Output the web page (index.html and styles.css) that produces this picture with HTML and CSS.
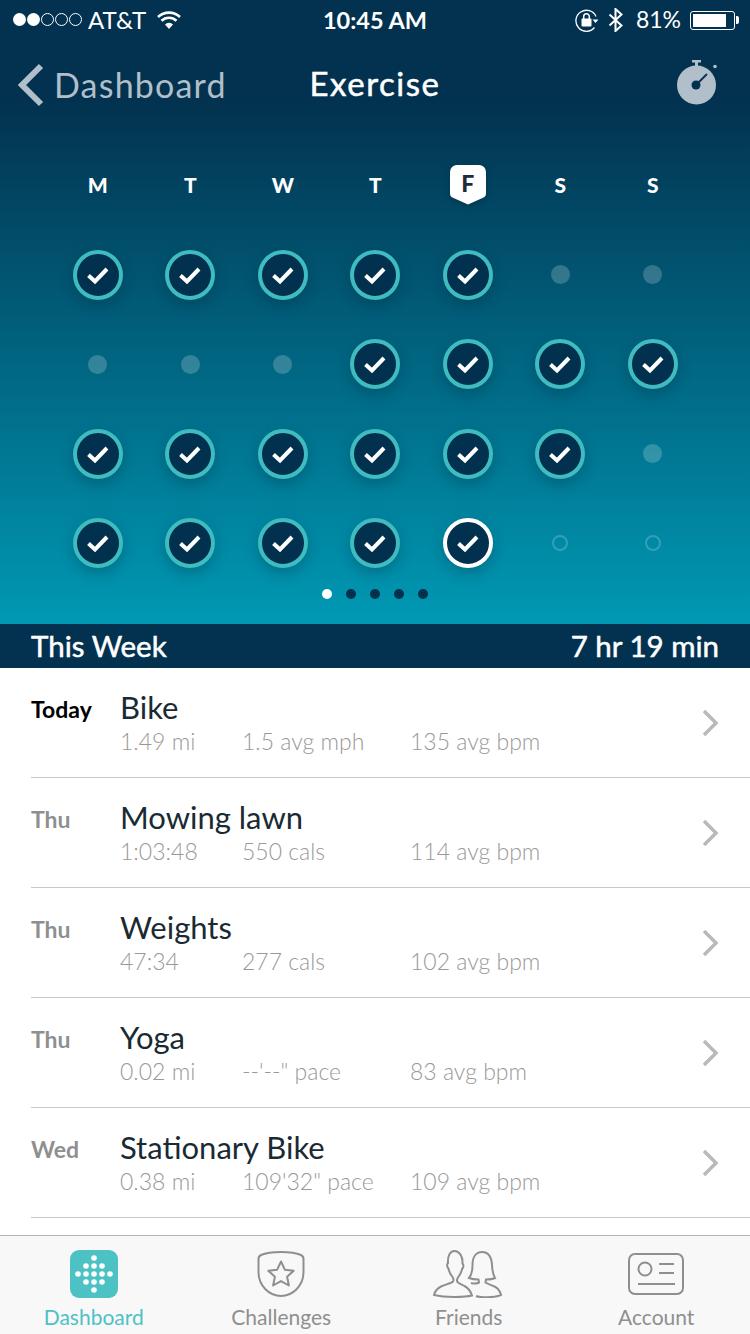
FILE: index.html
```html
<!DOCTYPE html>
<html lang="en">
<head>
	<meta charset="utf-8">
	<meta name="viewport" content="width=device-width, initial-scale=1.0" />
	<title>Exercise</title>
	<link rel="stylesheet" href="styles.css">
</head>
<body>
	<svg class="defs" width="0" height="0">
		<symbol id="check" viewBox="0 0 50 50"><path d="M15.500 25.500l6.500 6 12-12.500" fill="none" stroke="#fff" stroke-width="4"/></symbol>
		<symbol id="chev" viewBox="0 0 18 28"><path d="M2 2l12 12L2 26" fill="none" stroke="#b9b9b9" stroke-width="3.500"/></symbol>
	</svg>

	<div class="top">
		<div class="status">
			<div class="status-left">
				<span class="signal"><b></b><b></b><i></i><i></i><i></i></span>
				<span>AT&amp;T</span>
				<svg class="wifi" width="26" height="20" viewBox="0 0 26 20"><path d="M13 19l-4-4.500a5.500 5.500 0 0 1 8 0z" fill="#fff"/><path d="M5.500 10.800a10.800 10.800 0 0 1 15 0M2 7a16 16 0 0 1 22 0" fill="none" stroke="#fff" stroke-width="2.600"/></svg>
			</div>
			<div class="status-time">10:45 AM</div>
			<div class="status-right">
				<svg width="24" height="24" viewBox="0 0 24 24"><path d="M21 8.500A10.500 10.500 0 1 0 19.500 19.500" fill="none" stroke="#fff" stroke-width="1.300"/><path d="M17.500 11.500h6l-3 3.500z" fill="#fff"/><rect x="6.500" y="10.500" width="10" height="8" rx="1" fill="#fff"/><path d="M8.700 11V8.500a2.800 2.800 0 0 1 5.600 0V11" fill="none" stroke="#fff" stroke-width="1.500"/></svg>
				<svg class="bt" width="16" height="24" viewBox="0 0 16 24"><path d="M1.500 6.500l12 11-6 5.500V1l6 5.500-12 11" fill="none" stroke="#fff" stroke-width="2"/></svg>
				<span class="pct">81%</span>
				<span class="battery"><span class="battery-fill"></span></span><span class="battery-tip"></span>
			</div>
		</div>

		<div class="nav">
			<div class="nav-back">
				<svg width="28" height="44" viewBox="0 0 28 44"><path d="M25 3L6 22l19 19" fill="none" stroke="#b0bfc9" stroke-width="6"/></svg>
				<span>Dashboard</span>
			</div>
			<div class="nav-title">Exercise</div>
			<svg class="nav-timer" width="44" height="46" viewBox="0 0 44 46">
				<rect x="16" y="0" width="9" height="2.500" fill="#b0bfc9"/>
				<rect x="19" y="2" width="3" height="4" fill="#b0bfc9"/>
				<circle cx="20.500" cy="25" r="19.500" fill="#b0bfc9"/>
				<circle cx="39" cy="6.500" r="1.800" fill="#b0bfc9"/>
				<circle cx="20" cy="25" r="4.500" fill="#02324f"/>
				<path d="M20 25l11-11" stroke="#02324f" stroke-width="1.800"/>
			</svg>
		</div>

		<div class="cal">
			<div class="cal-day">M</div>
			<div class="cal-day">T</div>
			<div class="cal-day">W</div>
			<div class="cal-day">T</div>
			<div class="cal-day cal-today">
				<svg width="36" height="40" viewBox="0 0 36 40"><path d="M7 0h22a7 7 0 0 1 7 7v21c0 3-1 4-3.500 5L18 39.500 3.500 33C1 32 0 31 0 28V7a7 7 0 0 1 7-7z" fill="#fff"/></svg>
				<span>F</span>
			</div>
			<div class="cal-day">S</div>
			<div class="cal-day">S</div>

			<div class="cell"><span class="done"><svg><use href="#check"/></svg></span></div>
			<div class="cell"><span class="done"><svg><use href="#check"/></svg></span></div>
			<div class="cell"><span class="done"><svg><use href="#check"/></svg></span></div>
			<div class="cell"><span class="done"><svg><use href="#check"/></svg></span></div>
			<div class="cell"><span class="done"><svg><use href="#check"/></svg></span></div>
			<div class="cell"><span class="rest"></span></div>
			<div class="cell"><span class="rest"></span></div>

			<div class="cell"><span class="rest"></span></div>
			<div class="cell"><span class="rest"></span></div>
			<div class="cell"><span class="rest"></span></div>
			<div class="cell"><span class="done"><svg><use href="#check"/></svg></span></div>
			<div class="cell"><span class="done"><svg><use href="#check"/></svg></span></div>
			<div class="cell"><span class="done"><svg><use href="#check"/></svg></span></div>
			<div class="cell"><span class="done"><svg><use href="#check"/></svg></span></div>

			<div class="cell"><span class="done"><svg><use href="#check"/></svg></span></div>
			<div class="cell"><span class="done"><svg><use href="#check"/></svg></span></div>
			<div class="cell"><span class="done"><svg><use href="#check"/></svg></span></div>
			<div class="cell"><span class="done"><svg><use href="#check"/></svg></span></div>
			<div class="cell"><span class="done"><svg><use href="#check"/></svg></span></div>
			<div class="cell"><span class="done"><svg><use href="#check"/></svg></span></div>
			<div class="cell"><span class="rest"></span></div>

			<div class="cell"><span class="done"><svg><use href="#check"/></svg></span></div>
			<div class="cell"><span class="done"><svg><use href="#check"/></svg></span></div>
			<div class="cell"><span class="done"><svg><use href="#check"/></svg></span></div>
			<div class="cell"><span class="done"><svg><use href="#check"/></svg></span></div>
			<div class="cell"><span class="done now"><svg><use href="#check"/></svg></span></div>
			<div class="cell"><span class="todo"></span></div>
			<div class="cell"><span class="todo"></span></div>
		</div>

		<div class="pager"><b class="on"></b><b></b><b></b><b></b><b></b></div>
	</div>

	<div class="week">
		<span>This Week</span>
		<span>7 hr 19 min</span>
	</div>

	<ul class="list">
		<li class="row">
			<div class="row-day row-day-now">Today</div>
			<div class="row-main">
				<div class="row-name">Bike</div>
				<div class="row-stats"><span>1.49 mi</span><span>1.5 avg mph</span><span>135 avg bpm</span></div>
			</div>
			<svg class="chev"><use href="#chev"/></svg>
		</li>
		<li class="row">
			<div class="row-day">Thu</div>
			<div class="row-main">
				<div class="row-name">Mowing lawn</div>
				<div class="row-stats"><span>1:03:48</span><span>550 cals</span><span>114 avg bpm</span></div>
			</div>
			<svg class="chev"><use href="#chev"/></svg>
		</li>
		<li class="row">
			<div class="row-day">Thu</div>
			<div class="row-main">
				<div class="row-name">Weights</div>
				<div class="row-stats"><span>47:34</span><span>277 cals</span><span>102 avg bpm</span></div>
			</div>
			<svg class="chev"><use href="#chev"/></svg>
		</li>
		<li class="row">
			<div class="row-day">Thu</div>
			<div class="row-main">
				<div class="row-name">Yoga</div>
				<div class="row-stats"><span>0.02 mi</span><span>--'--" pace</span><span>83 avg bpm</span></div>
			</div>
			<svg class="chev"><use href="#chev"/></svg>
		</li>
		<li class="row">
			<div class="row-day">Wed</div>
			<div class="row-main">
				<div class="row-name">Stationary Bike</div>
				<div class="row-stats"><span>0.38 mi</span><span>109'32" pace</span><span>109 avg bpm</span></div>
			</div>
			<svg class="chev"><use href="#chev"/></svg>
		</li>
	</ul>

	<nav class="tabs">
		<div class="tab tab-on">
			<svg width="48" height="48" viewBox="0 0 48 48">
				<rect width="48" height="48" rx="9" fill="#4cc2c4"/>
				<g fill="#fff">
					<circle cx="24" cy="8" r="2.800"/>
					<circle cx="16" cy="16" r="2.800"/><circle cx="24" cy="16" r="2.800"/><circle cx="32" cy="16" r="2.800"/>
					<circle cx="8" cy="24" r="2.800"/><circle cx="16" cy="24" r="2.800"/><circle cx="24" cy="24" r="2.800"/><circle cx="32" cy="24" r="2.800"/><circle cx="40" cy="24" r="2.800"/>
					<circle cx="16" cy="32" r="2.800"/><circle cx="24" cy="32" r="2.800"/><circle cx="32" cy="32" r="2.800"/>
					<circle cx="24" cy="40" r="2.800"/>
				</g>
			</svg>
			<span>Dashboard</span>
		</div>
		<div class="tab">
			<svg width="48" height="48" viewBox="0 0 48 48" fill="none" stroke="#8f8f8f" stroke-width="2">
				<path d="M24 2c7 0 15 .8 20 3 1.500.8 2.500 2 2.500 4v13c0 14-11 24-22.500 24S1.500 36 1.500 22V9c0-2 1-3.200 2.500-4 5-2.200 13-3 20-3z"/>
				<path d="M24 11.500l3.800 8.200 8.900 1-6.600 6 1.800 8.800-7.900-4.400-7.900 4.400 1.800-8.800-6.600-6 8.900-1z" stroke-linejoin="round"/>
			</svg>
			<span>Challenges</span>
		</div>
		<div class="tab">
			<svg width="72" height="48" viewBox="0 0 72 48" fill="none" stroke="#8f8f8f" stroke-width="2">
				<path d="M1 45c1-4 3-6.500 7-8.500 4-2 10-3 12-5 1-1.500.5-3-.5-4.500-2-2.500-3.500-5-4-8.500-1.500-1-2-4-.5-5.500C14.500 6 17 1 21.500 1S30 6 29.500 13.500c1.500 1.500 1 4.500-.5 5.500-.5 3.500-2 6-4 8.500-1 1.500-1.500 3-.5 4.500 1 1.500 4 2.500 7 4 3 1.500 6 5 7.500 9.500-8 2-27 2-38-.5z"/>
				<path d="M38 33c3 1 6 .5 8-.5l-.5-3c-3 0-7-.5-9.500-1.500 2.500-3 3.500-8 3.500-13C39.500 7 43 2 49 2s9.500 5 10 13c.3 5 1 10 3 13-2 1-6 1.500-9 1.500l-.5 3c2 1.500 6 2.500 9 4 3 1.500 5.500 4.500 6.500 8.500-5 2-14 2.500-20 2-2-.2-4-.5-5-1"/>
			</svg>
			<span>Friends</span>
		</div>
		<div class="tab">
			<svg class="tab-account" width="56" height="42" viewBox="0 0 56 42" fill="none" stroke="#8f8f8f" stroke-width="2">
				<rect x="1" y="1" width="54" height="40" rx="6"/>
				<circle cx="17" cy="16" r="6.500"/>
				<path d="M31 11h15M31 20h15M10 31h37"/>
			</svg>
			<span>Account</span>
		</div>
	</nav>
</body>
</html>
```

FILE: styles.css
```css
html {
	font: 24px/1.2 Lato, "Open Sans", sans-serif;
}

body {
	margin: 0;
	width: 750px;
	height: 1334px;
	display: flex;
	flex-direction: column;
	overflow: hidden;
	background: #fff;
	color: #fff;
}

.defs {
	display: block;
	height: 0;
}

.top {
	height: 624px;
	flex: none;
	background: linear-gradient(#02324f 100px, #0099b4 624px);
}

/* status bar */
.status {
	height: 40px;
	padding: 0 11px 0 13px;
	display: grid;
	grid-template-columns: 1fr auto 1fr;
	align-items: center;
	font-size: 24px;
}

.status-left,
.status-right {
	display: flex;
	align-items: center;
}

.status-left {
	gap: 9px;
}

.status-right {
	justify-content: flex-end;
}

.status-time {
	font-weight: 700;
	font-size: 23.5px;
	margin-right: 2px;
}

.signal {
	display: flex;
	gap: 1px;
	margin-right: -3px;
}

.signal b,
.signal i {
	width: 13px;
	height: 13px;
	border-radius: 50%;
	box-sizing: border-box;
}

.signal b {
	background: #fff;
}

.signal i {
	border: 1px solid #fff;
}

.wifi {
	margin-left: 1px;
}

.bt {
	margin-left: 9px;
}

.pct {
	margin-left: 12px;
	font-size: 23px;
}

.battery {
	margin-left: 9px;
	width: 45px;
	height: 19px;
	padding: 2px;
	box-sizing: border-box;
	border: 1px solid #fff;
	border-radius: 3px;
	display: block;
}

.battery-fill {
	display: block;
	width: 33px;
	height: 100%;
	background: #fff;
}

.battery-tip {
	width: 3px;
	height: 8px;
	margin-left: 1px;
	background: #fff;
	border-radius: 0 2px 2px 0;
}

/* nav */
.nav {
	height: 90px;
	display: grid;
	grid-template-columns: 1fr auto 1fr;
	align-items: center;
	padding: 0 30px 0 16px;
}

.nav-back {
	display: flex;
	align-items: center;
	gap: 10px;
	font-size: 34px;
	letter-spacing: 1.200px;
	color: #b0bfc9;
}

.nav-title {
	font-size: 33px;
	-webkit-text-stroke: .5px #fff;
	letter-spacing: 1.500px;
	margin-left: 14px;
	margin-bottom: 2px;
}

.nav-timer {
	justify-self: end;
	margin-bottom: 5px;
}

/* calendar */
.cal {
	display: grid;
	grid-template-columns: repeat(7, 92.5px);
	grid-auto-rows: 89.5px;
	padding-left: 51.500px;
	margin-top: 10.500px;
}

.cal-day {
	display: flex;
	align-items: center;
	justify-content: center;
	padding-bottom: 2px;
	font-weight: 900;
	font-size: 21px;
}

.cal-today {
	display: grid;
	justify-items: center;
	padding-bottom: 1px;
}

.cal-today svg,
.cal-today span {
	grid-area: 1 / 1;
}

.cal-today svg {
	filter: drop-shadow(0 2px 3px rgba(0, 0, 0, .2));
}

.cal-today span {
	z-index: 1;
	color: #1d2c3b;
	font-size: 23px;
	margin-bottom: 1px;
}

.cell {
	display: flex;
	align-items: center;
	justify-content: center;
}

.done {
	width: 50px;
	height: 50px;
	box-sizing: border-box;
	border-radius: 50%;
	border: 4px solid #3fbcbf;
	background: #02304f;
	box-shadow: 0 6px 14px rgba(0, 30, 50, .25);
	display: flex;
	align-items: center;
	justify-content: center;
}

.done svg {
	flex: none;
	width: 50px;
	height: 50px;
}

.now {
	border-color: #fff;
}

.rest {
	width: 19px;
	height: 19px;
	border-radius: 50%;
	background: rgba(255, 255, 255, .2);
}

.todo {
	width: 16px;
	height: 16px;
	box-sizing: border-box;
	border-radius: 50%;
	border: 2px solid rgba(255, 255, 255, .2);
}

.pager {
	display: flex;
	justify-content: center;
	gap: 14px;
	margin-top: 1px;
}

.pager b {
	width: 10px;
	height: 10px;
	border-radius: 50%;
	background: #02304f;
}

.pager .on {
	background: #fff;
}

/* this week band */
.week {
	height: 44px;
	flex: none;
	padding: 0 31px;
	display: flex;
	justify-content: space-between;
	align-items: center;
	background: #02324f;
	font-size: 29.500px;
	-webkit-text-stroke: .5px #fff;
}

/* list */
.list {
	flex: 1;
	list-style: none;
	margin: 0;
	padding: 0;
}

.row {
	height: 110px;
	box-sizing: border-box;
	margin-left: 31px;
	padding-right: 30px;
	border-bottom: 1px solid #c8c8c8;
	display: flex;
	align-items: center;
}

.row-day {
	width: 89px;
	align-self: flex-start;
	padding-top: 28px;
	font-size: 23px;
	font-weight: 700;
	color: #8f8f8f;
}

.row-day-now {
	color: #000;
}

.row-main {
	flex: 1;
	margin-top: -1px;
}

.row-name {
	font-size: 31px;
	line-height: 38px;
	color: #1a2a33;
}

.row-stats {
	display: grid;
	grid-template-columns: 122px 168px auto;
	font-size: 23px;
	font-weight: 300;
	line-height: 30px;
	color: #999;
}

.chev {
	width: 18px;
	height: 28px;
}

/* tab bar */
.tabs {
	height: 99px;
	flex: none;
	box-sizing: border-box;
	border-top: 1px solid #b5b5b5;
	background: #f8f8f8;
	display: grid;
	grid-template-columns: repeat(4, 1fr);
}

.tab {
	display: flex;
	flex-direction: column;
	align-items: center;
	padding-top: 14px;
	font-size: 21px;
	color: #8f8f8f;
}

.tab svg {
	height: 48px;
	margin-bottom: 6px;
}

.tab .tab-account {
	height: 42px;
	margin: 3px 0 9px;
}

.tab-on {
	color: #4cc2c4;
}
```
